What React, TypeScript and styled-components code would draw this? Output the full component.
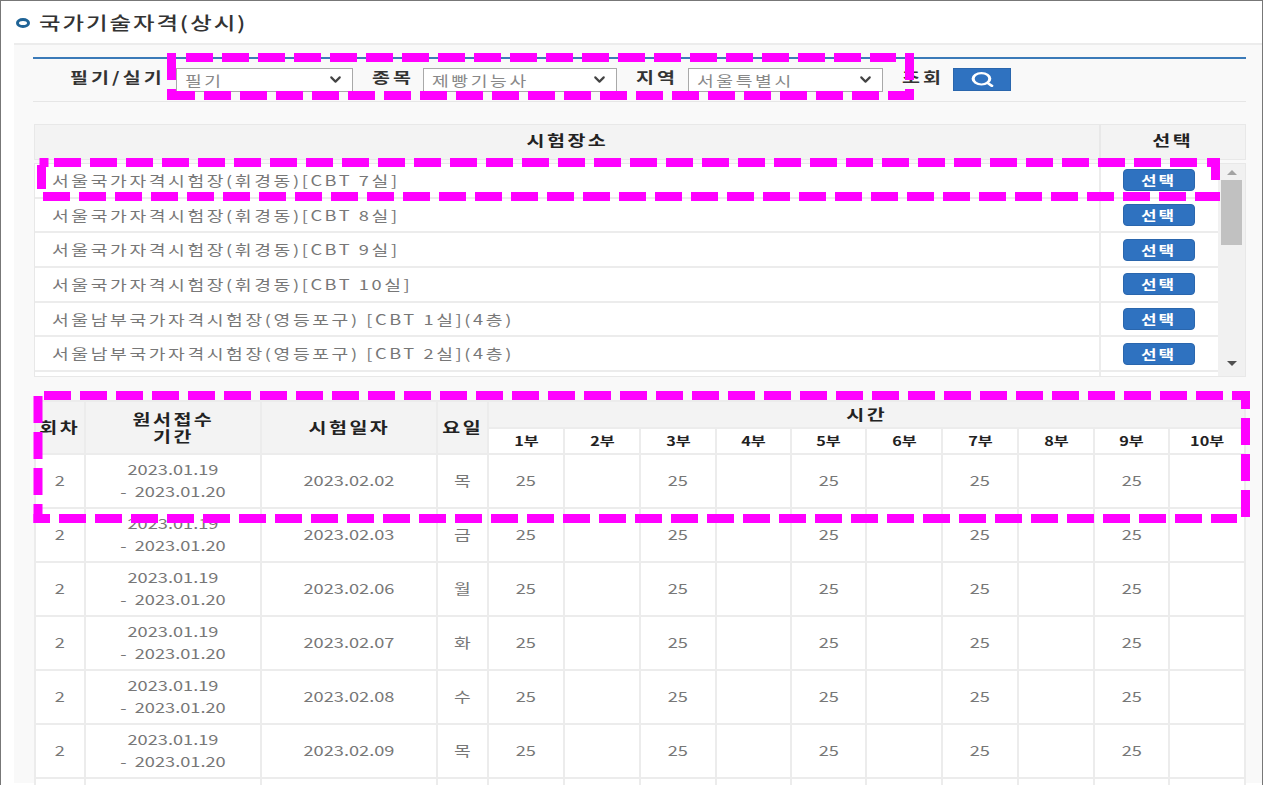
import React from "react";
import styled, { createGlobalStyle } from "styled-components";
import { ChevronDown, Search } from "lucide-react";

const GlobalStyle = createGlobalStyle`
  html, body {
    margin: 0;
    padding: 0;
    background: #fff;
  }
  * {
    box-sizing: border-box;
  }
`;

const FONT = `"Noto Sans CJK KR", sans-serif`;

const Page = styled.div`
  position: relative;
  width: 1263px;
  height: 785px;
  overflow: hidden;
  background: #fff;
  border: 1px solid #777;
  border-bottom: 0;
  font-family: ${FONT};
`;

// the screenshot is stretched sideways, so its text is too
const Wide = styled.span<{ $left?: boolean }>`
  display: inline-block;
  transform: scaleX(1.3);
  transform-origin: ${(p) => (p.$left ? "left" : "center")};
  white-space: nowrap;
`;

const TitleRow = styled.div`
  display: flex;
  align-items: center;
  gap: 9px;
  height: 42px;
  padding-left: 15px;
`;

const Bullet = styled.span`
  width: 14px;
  height: 10px;
  border: 3.5px solid #1f6396;
  border-radius: 50%;
  margin-top: 2px;
`;

const Title = styled.h1`
  margin: 0;
  font-size: 18px;
  font-weight: 500;
  letter-spacing: 1.5px;
  color: #333;
`;

const Panel = styled.div`
  margin-left: 13px;
  height: 740px;
  padding: 12px 16px 0 19px;
  background: #f9f9f9;
  border-top: 2px solid #ececec;
`;

const FilterBar = styled.div`
  display: flex;
  align-items: center;
  height: 45px;
  padding: 0 0 1px 37px;
  border-top: 2px solid #3b7ab8;
  border-bottom: 1px solid #e6e6e6;
`;

const FilterLabel = styled.label<{ $gap: number }>`
  width: ${(p) => p.$gap}px;
  font-size: 15px;
  font-weight: 700;
  letter-spacing: 2.4px;
  color: #333;
  margin-top: -6px;
`;

const SelectBox = styled.div<{ $width: number }>`
  display: flex;
  align-items: center;
  justify-content: space-between;
  width: ${(p) => p.$width}px;
  height: 24px;
  margin-right: 19px;
  padding: 0 8px 0 8px;
  background: #fff;
  border: 1px solid #a9a9a9;
  font-size: 14px;
  letter-spacing: 2px;
  color: #888;
  svg {
    color: #444;
  }
`;

const SearchButton = styled.button`
  display: flex;
  align-items: center;
  justify-content: center;
  width: 58px;
  height: 23px;
  margin-left: 9px;
  padding: 0;
  background: #2f72c0;
  border: 1px solid #2a66ad;
  color: #fff;
`;

const ListHeader = styled.div`
  display: flex;
  height: 36px;
  margin: 22px 0 0 1px;
  background: #f3f3f3;
  border: 1px solid #e8e8e8;
`;

const HeaderCell = styled.div<{ $grow?: boolean }>`
  display: flex;
  align-items: center;
  justify-content: center;
  padding-bottom: 6px;
  ${(p) => (p.$grow ? "flex: 1;" : "width: 146px; border-left: 2px solid #e8e8e8;")}
  font-size: 15px;
  font-weight: 700;
  letter-spacing: 1.9px;
  color: #222;
`;

const ListBox = styled.div`
  display: flex;
  height: 214px;
  margin: 3px 0 0 1px;
  background: #fff;
  border: 1px solid #e8e8e8;
  overflow: hidden;
`;

const ListRows = styled.div`
  flex: 1;
  overflow: hidden;
`;

const ListRow = styled.div`
  display: flex;
  height: 34.7px;
  border-bottom: 2px solid #ececec;
`;

const PlaceName = styled.div`
  flex: 1;
  display: flex;
  align-items: center;
  padding-left: 17px;
  padding-bottom: 1px;
  font-size: 14px;
  letter-spacing: 2px;
  color: #777;
`;

const SelectCell = styled.div`
  display: flex;
  align-items: center;
  justify-content: center;
  width: 119px;
  padding-right: 2px;
  border-left: 2px solid #ececec;
`;

const PickButton = styled.button`
  display: block;
  width: 72px;
  height: 22px;
  padding: 0;
  background: #2f72c0;
  border: 1px solid #2a66ad;
  border-radius: 4px;
  font-family: ${FONT};
  font-size: 13px;
  font-weight: 700;
  line-height: 16px;
  letter-spacing: 1.5px;
  color: #fff;
  text-align: center;
`;

const Scrollbar = styled.div`
  display: flex;
  flex-direction: column;
  align-items: center;
  width: 27px;
  padding-top: 6px;
  background: #f1f1f1;
`;

const ScrollThumb = styled.div`
  width: 21px;
  height: 65px;
  margin: 5px 0 116px;
  background: #c1c1c1;
`;

const Arrow = styled.span<{ $up?: boolean }>`
  width: 0;
  height: 0;
  border-left: 5px solid transparent;
  border-right: 5px solid transparent;
  ${(p) =>
    p.$up
      ? "border-bottom: 5px solid #a3a3a3;"
      : "border-top: 5px solid #505050;"}
`;

const ScheduleTable = styled.table`
  width: 1211px;
  margin: 23px 0 0 1px;
  table-layout: fixed;
  border-collapse: collapse;
  background: #fff;
`;

const HeadCell = styled.th<{ $white?: boolean }>`
  padding: 0 0 2px;
  background: ${(p) => (p.$white ? "#fff" : "#f3f3f3")};
  border: 2px solid #ececec;
  font-size: 15px;
  font-weight: 700;
  line-height: 17px;
  letter-spacing: 1.9px;
  color: #222;
`;

const SubHeadCell = styled(HeadCell)`
  font-size: 12.5px;
  letter-spacing: 0;
`;

const Cell = styled.td`
  padding: 0 0 2px;
  border: 2px solid #ececec;
  font-size: 14px;
  line-height: 22px;
  text-align: center;
  color: #777;
`;

const DateRange = styled(Wide)`
  display: block;
`;

const HeadRow = styled.tr<{ $height: number }>`
  height: ${(p) => p.$height}px;
`;

const BodyRow = styled.tr`
  height: 54px;
`;

const Overlay = styled.svg`
  position: absolute;
  left: -1px;
  top: -1px;
  width: 1263px;
  height: 785px;
  pointer-events: none;
`;

const places = [
  "서울국가자격시험장(휘경동)[CBT 7실]",
  "서울국가자격시험장(휘경동)[CBT 8실]",
  "서울국가자격시험장(휘경동)[CBT 9실]",
  "서울국가자격시험장(휘경동)[CBT 10실]",
  "서울남부국가자격시험장(영등포구) [CBT 1실](4층)",
  "서울남부국가자격시험장(영등포구) [CBT 2실](4층)",
];

const exams = [
  ["2023.02.02", "목"],
  ["2023.02.03", "금"],
  ["2023.02.06", "월"],
  ["2023.02.07", "화"],
  ["2023.02.08", "수"],
  ["2023.02.09", "목"],
];

const columns = [50, 176, 176, 51, 76, 76, 76, 75, 75, 76, 76, 76, 75, 76];
const slots = [1, 2, 3, 4, 5, 6, 7, 8, 9, 10];

// x1 y1 x2 y2 and dash offset of each side of the highlight boxes
const dashes = [
  [186, 57.5, 896, 57.5, 0],
  [909.5, 53, 909.5, 80, 0],
  [909.5, 89, 909.5, 100, 0],
  [168, 95.5, 914, 95.5, 0],
  [171.5, 53, 171.5, 80, 0],
  [171.5, 89, 171.5, 100, 0],
  [54, 162.5, 1197, 162.5, 0],
  [1207, 162.5, 1220, 162.5, 0],
  [41.5, 165, 41.5, 189, 0],
  [44, 158, 44, 167, 0],
  [43, 196.5, 1220, 196.5, 0],
  [1215.5, 158, 1215.5, 180, 0],
  [44, 395.5, 1250, 395.5, 0],
  [38, 396, 38, 523, 0],
  [1245.5, 391, 1245.5, 517, 9],
  [33.5, 518.5, 1237, 518.5, 10.5],
];

const Chevron = () => <ChevronDown size={17} strokeWidth={3} />;

const App: React.FC = () => {
  return (
    <>
      <GlobalStyle />
      <Page>
        <TitleRow>
          <Bullet />
          <Title>
            <Wide $left>국가기술자격(상시)</Wide>
          </Title>
        </TitleRow>
        <Panel>
          <FilterBar>
            <FilterLabel $gap={106}>
              <Wide $left>필기/실기</Wide>
            </FilterLabel>
            <SelectBox $width={177}>
              <Wide $left>필기</Wide>
              <Chevron />
            </SelectBox>
            <FilterLabel $gap={51}>
              <Wide $left>종목</Wide>
            </FilterLabel>
            <SelectBox $width={194}>
              <Wide $left>제빵기능사</Wide>
              <Chevron />
            </SelectBox>
            <FilterLabel $gap={52}>
              <Wide $left>지역</Wide>
            </FilterLabel>
            <SelectBox $width={195}>
              <Wide $left>서울특별시</Wide>
              <Chevron />
            </SelectBox>
            <FilterLabel $gap={42}>
              <Wide $left>조회</Wide>
            </FilterLabel>
            <SearchButton aria-label="조회">
              <Search width={25} height={17} strokeWidth={3} preserveAspectRatio="none" />
            </SearchButton>
          </FilterBar>

          <ListHeader>
            <HeaderCell $grow>
              <Wide>시험장소</Wide>
            </HeaderCell>
            <HeaderCell>
              <Wide>선택</Wide>
            </HeaderCell>
          </ListHeader>
          <ListBox>
            <ListRows>
              {places.map((place) => (
                <ListRow key={place}>
                  <PlaceName>
                    <Wide $left>{place}</Wide>
                  </PlaceName>
                  <SelectCell>
                    <PickButton>
                      <Wide>선택</Wide>
                    </PickButton>
                  </SelectCell>
                </ListRow>
              ))}
              <ListRow>
                <PlaceName />
                <SelectCell />
              </ListRow>
            </ListRows>
            <Scrollbar>
              <Arrow $up />
              <ScrollThumb />
              <Arrow />
            </Scrollbar>
          </ListBox>

          <ScheduleTable>
            <colgroup>
              {columns.map((width, i) => (
                <col key={i} width={width} />
              ))}
            </colgroup>
            <thead>
              <HeadRow $height={27}>
                <HeadCell rowSpan={2}>
                  <Wide>회차</Wide>
                </HeadCell>
                <HeadCell rowSpan={2}>
                  <Wide>
                    원서접수
                    <br />
                    기간
                  </Wide>
                </HeadCell>
                <HeadCell rowSpan={2}>
                  <Wide>시험일자</Wide>
                </HeadCell>
                <HeadCell rowSpan={2}>
                  <Wide>요일</Wide>
                </HeadCell>
                <HeadCell colSpan={10}>
                  <Wide>시간</Wide>
                </HeadCell>
              </HeadRow>
              <HeadRow $height={26}>
                {slots.map((slot) => (
                  <SubHeadCell key={slot} $white>
                    <Wide>{slot}부</Wide>
                  </SubHeadCell>
                ))}
              </HeadRow>
            </thead>
            <tbody>
              {exams.map(([date, day]) => (
                <BodyRow key={date}>
                  <Cell>
                    <Wide>2</Wide>
                  </Cell>
                  <Cell>
                    <DateRange>2023.01.19</DateRange>
                    <DateRange>- {"\u00a0"}2023.01.20</DateRange>
                  </Cell>
                  <Cell>
                    <Wide>{date}</Wide>
                  </Cell>
                  <Cell>
                    <Wide>{day}</Wide>
                  </Cell>
                  {slots.map((slot) => (
                    <Cell key={slot}>{slot % 2 === 1 && <Wide>25</Wide>}</Cell>
                  ))}
                </BodyRow>
              ))}
              <BodyRow>
                {columns.map((_, i) => (
                  <Cell key={i} />
                ))}
              </BodyRow>
            </tbody>
          </ScheduleTable>
        </Panel>
        <Overlay viewBox="0 0 1263 785">
          {dashes.map(([x1, y1, x2, y2, offset], i) => (
            <line
              key={i}
              x1={x1}
              y1={y1}
              x2={x2}
              y2={y2}
              stroke="#ff00ff"
              strokeWidth={9}
              strokeDasharray="27 9"
              strokeDashoffset={offset}
            />
          ))}
        </Overlay>
      </Page>
    </>
  );
};

export default App;
